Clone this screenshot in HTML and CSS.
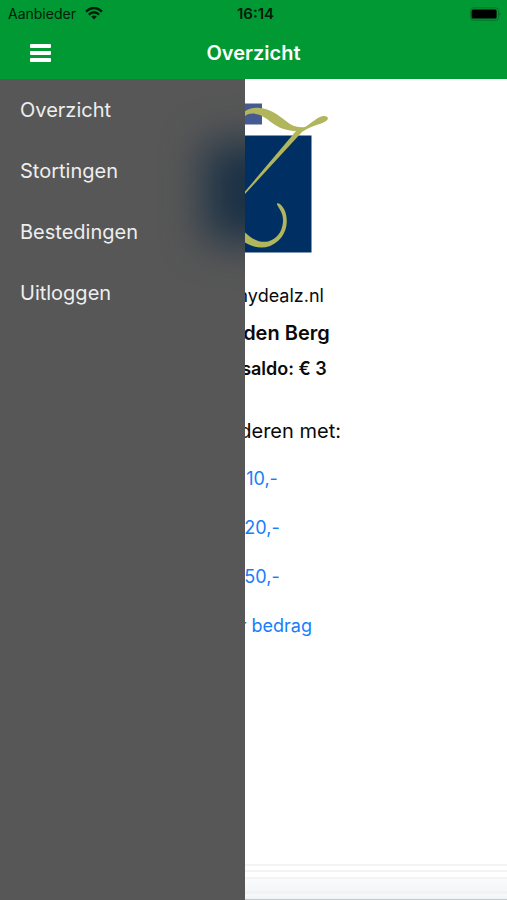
FILE: index.html
```html
<!DOCTYPE html>
<html lang="nl">
<head>
<meta charset="utf-8">
<meta name="viewport" content="width=device-width, initial-scale=1">
<title>Overzicht</title>
<link rel="stylesheet" href="styles.css">
</head>
<body>
<header class="header">
  <div class="status">
    <span class="carrier">Aanbieder
      <svg class="wifi" viewBox="0 0 18 13" width="18" height="13" aria-hidden="true">
        <path d="M1 4.6Q9-2.6 17 4.6" fill="none" stroke="currentColor" stroke-width="2.4"/>
        <path d="M3.8 7.6Q9 3 14.2 7.6" fill="none" stroke="currentColor" stroke-width="2.4"/>
        <path d="M6.2 9.6Q9 7.2 11.8 9.6L9 12.4Z" fill="currentColor"/>
      </svg>
    </span>
    <span class="clock">16:14</span>
    <svg class="battery" viewBox="0 0 33 14" width="33" height="14" aria-hidden="true">
      <rect x="0.5" y=".8" width="28" height="12.4" rx="3" fill="none" stroke="#087326" stroke-width="1"/>
      <rect x="1.6" y="2.6" width="25" height="9" rx="1.5"/>
      <path d="M29.500 5Q31.500 7 29.500 9Z" fill="#087326"/>
    </svg>
  </div>
  <div class="bar">
    <button class="menu-button" type="button" aria-label="Menu">
      <svg viewBox="0 0 22 20" width="22" height="20" aria-hidden="true">
        <g fill="currentColor"><rect y="1" width="21" height="4" rx="1"/><rect y="8" width="21" height="4" rx="1"/><rect y="15" width="21" height="4" rx="1"/></g>
      </svg>
    </button>
    <h1 class="title">Overzicht</h1>
  </div>
</header>
<div class="view">
  <main class="content">
    <svg class="logo" viewBox="179 100 149 156" width="149" height="156" role="img" aria-label="Logo">
      <path fill="#455a90" d="M242 103.500h20V124.500h-20z"/>
      <path fill="#003063" d="M195 135.500H311.500V252.500H195z"/>
      <path fill="#b1b55b" d="M236 120C243 110 252 107 260 108C270 109 277 114 286 121C292 126 297 128 305 127C313 122 316 118 323 116Q327 115.500 328 118C328 121 323 123 318 124.500C311 127 306 129 302 132L245 194L238 200V197L245 191.500L296 131C284 131 275 126 267 119C259 113 251 112 245 116L238 121Z"/>
      <path fill="#b1b55b" d="M277 203.500C278.500 202 283 206 285 211C289 222 286 234 278 241C269 249 257 250 245 242.500L236 232L245 232.500C252 239 259 243 268 241.500C277 239 282 232 283 222C283.500 214 280 210 277 204.500Z"/>
    </svg>
    <p class="mail">info@mydealz.nl</p>
    <h2 class="name">A. van den Berg</h2>
    <p class="balance">Huidig saldo: € 3</p>
    <p class="prompt">Opwaarderen met:</p>
    <ul class="amounts">
      <li><a href="#10">€ 10,-</a></li>
      <li><a href="#20">€ 20,-</a></li>
      <li><a href="#50">€ 50,-</a></li>
      <li><a href="#ander">Ander bedrag</a></li>
    </ul>
  </main>
  <div class="footer-edge"></div>
  <nav class="drawer" aria-label="Hoofdmenu">
    <a href="#overzicht">Overzicht</a>
    <a href="#stortingen">Stortingen</a>
    <a href="#bestedingen">Bestedingen</a>
    <a href="#uitloggen">Uitloggen</a>
  </nav>
</div>
</body>
</html>
```

FILE: styles.css
```css
* { box-sizing: border-box; }
body {
  margin: 0;
  min-height: 100vh;
  display: flex;
  flex-direction: column;
  background: #fff;
  color: #0a0a0a;
  font-family: Inter, "Liberation Sans", sans-serif;
  font-size: 18px;
}
a { color: #157efb; text-decoration: none; }
.header { background: #009933; }
.status {
  display: grid;
  grid-template-columns: 1fr auto 1fr;
  align-items: center;
  height: 27px;
  padding: 0 4px 0 8px;
  color: #021c08;
  font-size: 14px;
}
.carrier { display: flex; align-items: center; gap: 9px; }
.clock { font-size: 15px; font-weight: 600; }
.battery { justify-self: end; }
.bar {
  display: grid;
  grid-template-columns: 1fr auto 1fr;
  align-items: center;
  height: 52px;
  padding: 0 20px;
  color: #fff;
}
.menu-button {
  display: flex;
  justify-self: start;
  padding: 8px 10px;
  border: 0;
  background: none;
  color: inherit;
}
.title { margin: 0; font-size: 20px; font-weight: 600; line-height: 24px; }
.view {
  position: relative;
  flex: 1;
  display: flex;
  flex-direction: column;
  justify-content: space-between;
}
.content {
  display: flex;
  flex-direction: column;
  align-items: center;
  padding-top: 21px;
}
.content p, .name { margin: 0; line-height: 24px; }
.content .mail { margin-top: 28px; }
.name { margin-top: 13px; font-size: 20px; font-weight: 600; }
.content .balance { margin-top: 12px; font-weight: 600; }
.content .prompt { margin-top: 38px; font-size: 20px; }
.amounts {
  display: flex;
  flex-direction: column;
  gap: 25px;
  margin: 24px 0 0;
  padding: 0;
  list-style: none;
  line-height: 24px;
  text-align: center;
}
.footer-edge {
  height: 36px;
  border-bottom: 1px solid #c5c9cc;
  background: linear-gradient(#f3f3f3 2px, #fff 2px 6px, #f3f3f3 6px 8px, #fff 8px 13px, #f3f4f4 13px 15px, #fafbfc 15px, #f4f6f7 27px, #edf0f2 28px, #f7f9fb 31px, #eff2f5);
}
.drawer {
  position: absolute;
  inset: 0 auto 0 0;
  width: 245px;
  display: flex;
  flex-direction: column;
  overflow: hidden;
  background: #575757;
}
/* Soft shadow of the logo behind the drawer. */
.drawer::after {
  content: "";
  position: absolute;
  top: 64px;
  right: -60px;
  width: 100px;
  height: 98px;
  background: #1b3145;
  filter: blur(20px);
}
.drawer a {
  padding: 19px 20px 18px;
  color: #eee;
  font-size: 20px;
  line-height: 24px;
}
```
